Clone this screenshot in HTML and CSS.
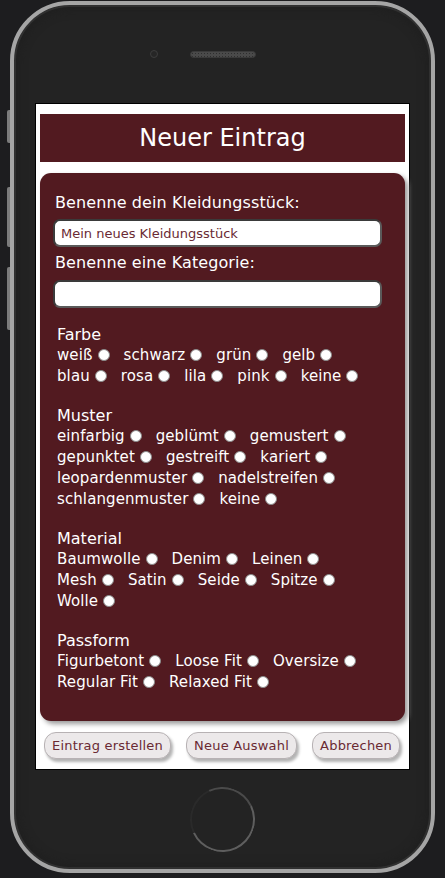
FILE: index.html
```html
<!DOCTYPE html>
<html lang="de">
<head>
<meta charset="utf-8">
<title>Neuer Eintrag</title>
<link rel="stylesheet" href="styles.css">
</head>
<body>
<div class="phone">
  <span class="side-btn side-a"></span>
  <span class="side-btn side-b"></span>
  <span class="side-btn side-c"></span>
  <div class="phone-top">
    <span class="camera"></span>
    <span class="speaker"></span>
    <span></span>
  </div>
  <div class="screen">
    <h1 class="title">Neuer Eintrag</h1>
    <form class="panel">
      <label class="field-label">Benenne dein Kleidungsstück:</label>
      <input class="text-input" type="text" value="Mein neues Kleidungsstück">
      <label class="field-label second">Benenne eine Kategorie:</label>
      <input class="text-input second-input" type="text">

      <div class="group first">
        <div class="group-title">Farbe</div>
        <div class="row">
          <label class="opt">weiß<input type="radio" name="farbe"></label>
          <label class="opt">schwarz<input type="radio" name="farbe"></label>
          <label class="opt">grün<input type="radio" name="farbe"></label>
          <label class="opt">gelb<input type="radio" name="farbe"></label>
        </div>
        <div class="row">
          <label class="opt">blau<input type="radio" name="farbe"></label>
          <label class="opt">rosa<input type="radio" name="farbe"></label>
          <label class="opt">lila<input type="radio" name="farbe"></label>
          <label class="opt">pink<input type="radio" name="farbe"></label>
          <label class="opt">keine<input type="radio" name="farbe"></label>
        </div>
      </div>

      <div class="group">
        <div class="group-title">Muster</div>
        <div class="row">
          <label class="opt">einfarbig<input type="radio" name="muster"></label>
          <label class="opt">geblümt<input type="radio" name="muster"></label>
          <label class="opt">gemustert<input type="radio" name="muster"></label>
        </div>
        <div class="row">
          <label class="opt">gepunktet<input type="radio" name="muster"></label>
          <label class="opt">gestreift<input type="radio" name="muster"></label>
          <label class="opt">kariert<input type="radio" name="muster"></label>
        </div>
        <div class="row">
          <label class="opt">leopardenmuster<input type="radio" name="muster"></label>
          <label class="opt">nadelstreifen<input type="radio" name="muster"></label>
        </div>
        <div class="row">
          <label class="opt">schlangenmuster<input type="radio" name="muster"></label>
          <label class="opt">keine<input type="radio" name="muster"></label>
        </div>
      </div>

      <div class="group">
        <div class="group-title">Material</div>
        <div class="row">
          <label class="opt">Baumwolle<input type="radio" name="material"></label>
          <label class="opt">Denim<input type="radio" name="material"></label>
          <label class="opt">Leinen<input type="radio" name="material"></label>
        </div>
        <div class="row">
          <label class="opt">Mesh<input type="radio" name="material"></label>
          <label class="opt">Satin<input type="radio" name="material"></label>
          <label class="opt">Seide<input type="radio" name="material"></label>
          <label class="opt">Spitze<input type="radio" name="material"></label>
        </div>
        <div class="row">
          <label class="opt">Wolle<input type="radio" name="material"></label>
        </div>
      </div>

      <div class="group">
        <div class="group-title">Passform</div>
        <div class="row">
          <label class="opt">Figurbetont<input type="radio" name="passform"></label>
          <label class="opt">Loose Fit<input type="radio" name="passform"></label>
          <label class="opt">Oversize<input type="radio" name="passform"></label>
        </div>
        <div class="row">
          <label class="opt">Regular Fit<input type="radio" name="passform"></label>
          <label class="opt">Relaxed Fit<input type="radio" name="passform"></label>
        </div>
      </div>
    </form>
    <div class="actions">
      <button class="btn" type="button">Eintrag erstellen</button>
      <button class="btn" type="button">Neue Auswahl</button>
      <button class="btn" type="button">Abbrechen</button>
    </div>
  </div>
  <div class="phone-bottom">
    <span class="home"></span>
  </div>
</div>
</body>
</html>
```

FILE: styles.css
```css
* {
  box-sizing: border-box;
}

html, body {
  margin: 0;
  padding: 0;
}

body {
  background: #1d1d1f;
  width: 445px;
  height: 878px;
  overflow: hidden;
  padding-top: 1px;
  font-family: "DejaVu Sans", "Liberation Sans", sans-serif;
}

.phone {
  position: relative;
  margin-left: 10px;
  width: 425px;
  height: 872px;
  border: 4px solid #a5a5a5;
  border-radius: 60px;
  background: #232323;
  box-shadow: inset 0 0 0 2px #303030, inset 0 0 10px 4px #1f1f1f;
  padding: 0 21px;
}

.side-btn {
  position: absolute;
  left: -7px;
  width: 3px;
  background: #7c7c7c;
  border-radius: 2px 0 0 2px;
}

.side-a { top: 105px; height: 33px; }
.side-b { top: 182px; height: 60px; }
.side-c { top: 262px; height: 63px; }

.phone-top {
  height: 98px;
  display: grid;
  grid-template-columns: 1fr auto 1fr;
  align-items: center;
}

.camera {
  justify-self: end;
  margin-right: 32px;
  width: 8px;
  height: 8px;
  border-radius: 50%;
  background: #262626;
  border: 1px solid #3d3d3d;
}

.speaker {
  width: 66px;
  height: 7px;
  border-radius: 4px;
  background-color: #4a4a4a;
  background-image: radial-gradient(#2e2e2e 35%, transparent 40%);
  background-size: 3px 3px;
  border: 1px solid #3a3a3a;
}

.screen {
  width: 375px;
  height: 667px;
  background: #fff;
  border: 1px solid #000;
  padding: 10px 4px 0;
}

.title {
  margin: 0;
  height: 48px;
  background: #521a20;
  color: #fff;
  font-size: 24px;
  font-weight: normal;
  line-height: 48px;
  text-align: center;
}

.panel {
  margin: 11px 0 0;
  height: 548px;
  background: #521a20;
  border-radius: 11px;
  box-shadow: 3px 3px 5px #9a9a9a;
  padding: 19px 15px 0 13px;
  color: #fff;
  display: flex;
  flex-direction: column;
}

.field-label {
  display: block;
  padding-left: 2px;
  font-size: 16px;
  line-height: 22px;
  letter-spacing: 0.1px;
}

.field-label.second {
  margin-top: 5px;
}

.text-input {
  display: block;
  margin-top: 5px;
  width: 329px;
  height: 28px;
  border: 2px solid #3a3a3a;
  border-bottom-color: #5a5a5a;
  border-right-color: #5a5a5a;
  border-radius: 7px;
  background: #fff;
  padding: 0 6px;
  font-family: "DejaVu Sans", "Liberation Sans", sans-serif;
  font-size: 13px;
  color: #6a2a33;
  outline: none;
}

.second-input {
  margin-top: 6px;
}

.group {
  margin-top: 18px;
  padding-left: 4px;
}

.group.first {
  margin-top: 16px;
}

.group-title {
  font-size: 16px;
  line-height: 21px;
  height: 21px;
}

.row {
  display: flex;
  column-gap: 14px;
  height: 21px;
  line-height: 21px;
  font-size: 15px;
  letter-spacing: 0.1px;
}

.opt {
  display: inline-flex;
  align-items: center;
  white-space: nowrap;
}

.opt input {
  -webkit-appearance: none;
  appearance: none;
  width: 12px;
  height: 12px;
  margin: 0 0 2px 5px;
  border-radius: 50%;
  background: #fff;
  border: 1px solid #8a8a8a;
}

.actions {
  margin-top: 11px;
  padding: 0 5px 0 4px;
  display: flex;
  justify-content: space-between;
}

.btn {
  height: 27px;
  padding: 0 7px;
  background: #ece9ea;
  border: 1px solid #b7b2b4;
  border-radius: 12px;
  box-shadow: 2px 3px 3px rgba(0, 0, 0, 0.3);
  color: #6a2a33;
  font-family: "DejaVu Sans", "Liberation Sans", sans-serif;
  font-size: 13px;
  line-height: 25px;
  letter-spacing: 0.2px;
}

.phone-bottom {
  height: 99px;
  display: flex;
  align-items: center;
  justify-content: center;
}

.home {
  width: 65px;
  height: 65px;
  border-radius: 50%;
  border: 2px solid #5e5e5e;
  border-left-color: #2a2a2a;
  border-top-color: #4a4a4a;
  transform: rotate(20deg);
}
```
